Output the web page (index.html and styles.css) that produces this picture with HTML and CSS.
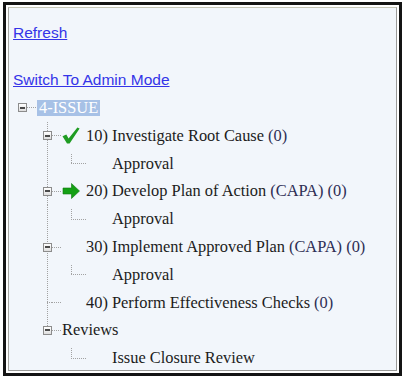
FILE: index.html
```html
<!DOCTYPE html>
<html>
<head>
<meta charset="utf-8">
<title>Issue Tree</title>
<link rel="stylesheet" href="styles.css">
</head>
<body>
<div class="frame">
  <div class="inner">
    <a class="link link-refresh" href="#">Refresh</a>
    <a class="link link-admin" href="#">Switch To Admin Mode</a>
    <div class="tree">
      <div class="row">
        <span class="ind0"></span>
        <span class="tg"><span class="box"></span></span>
        <span class="hd hd-root"></span>
        <span class="sel">4-ISSUE</span>
      </div>

      <div class="row">
        <span class="ind1"></span>
        <span class="tg vl"><span class="box"></span></span>
        <span class="hd"></span>
        <span class="icon">
          <svg width="18" height="17" viewBox="0 0 18 17"><path d="M0.5 9.2 L4.3 7.6 L6.6 11.4 L15.4 0.6 L17.6 1.6 L7.6 16.4 L5 16.4 Z" fill="#1f9c22"/></svg>
        </span>
        <span class="txt">10) Investigate Root Cause <span class="cnt">(0)</span></span>
      </div>
      <div class="row">
        <span class="ind1"></span>
        <span class="tg vl"></span>
        <span class="gap2"></span>
        <span class="elbow"></span>
        <span class="sub">Approval</span>
      </div>

      <div class="row">
        <span class="ind1"></span>
        <span class="tg vl"><span class="box"></span></span>
        <span class="hd"></span>
        <span class="icon">
          <svg width="18" height="16" viewBox="0 0 18 16"><path d="M1 5 L9.5 5 L9.5 0.5 L17.5 8 L9.5 15.5 L9.5 11 L1 11 Z" fill="#14a014" stroke="#0d7a0d" stroke-width="0.6"/></svg>
        </span>
        <span class="txt">20) Develop Plan of Action <span class="cnt">(CAPA) (0)</span></span>
      </div>
      <div class="row">
        <span class="ind1"></span>
        <span class="tg vl"></span>
        <span class="gap2"></span>
        <span class="elbow"></span>
        <span class="sub">Approval</span>
      </div>

      <div class="row">
        <span class="ind1"></span>
        <span class="tg vl"><span class="box"></span></span>
        <span class="hd"></span>
        <span class="icon"></span>
        <span class="txt">30) Implement Approved Plan <span class="cnt">(CAPA) (0)</span></span>
      </div>
      <div class="row">
        <span class="ind1"></span>
        <span class="tg vl"></span>
        <span class="gap2"></span>
        <span class="elbow"></span>
        <span class="sub">Approval</span>
      </div>

      <div class="row">
        <span class="ind1"></span>
        <span class="tg tee"></span>
        <span class="hd"></span>
        <span class="icon"></span>
        <span class="txt">40) Perform Effectiveness Checks <span class="cnt">(0)</span></span>
      </div>

      <div class="row">
        <span class="ind1"></span>
        <span class="tg vt"><span class="box"></span></span>
        <span class="hd"></span>
        <span class="txt">Reviews</span>
      </div>
      <div class="row">
        <span class="ind1"></span>
        <span class="tg"></span>
        <span class="gap2"></span>
        <span class="elbow"></span>
        <span class="sub">Issue Closure Review</span>
      </div>
    </div>
  </div>
</div>
</body>
</html>
```

FILE: styles.css
```css
html, body {
  margin: 0;
  padding: 0;
  background: #ffffff;
}

.frame {
  margin: 2px 0 0 3px;
  width: 389px;
  height: 364px;
  border: 3px solid #141414;
  padding: 2px;
  background: #ffffff;
}

.inner {
  width: 383px;
  height: 346px;
  border: 1px solid #9a9a98;
  border-top-color: #c6c6b6;
  border-left-color: #a8a8a4;
  background: #f2f6fb;
  padding: 16px 0 0 4px;
  display: flex;
  flex-direction: column;
  align-items: flex-start;
}

.link {
  font-family: "Liberation Sans", Arial, sans-serif;
  font-size: 15.5px;
  line-height: 18px;
  color: #3434e8;
  text-decoration: underline;
}

.link-admin {
  margin-top: 29px;
}

.tree {
  margin-top: 4px;
  font-family: "Liberation Serif", "Times New Roman", serif;
  font-size: 16.4px;
  color: #1c1c1c;
}

.row {
  height: 27.8px;
  display: flex;
  align-items: stretch;
}

.row:first-child {
  height: 29px;
}

.row > span {
  flex: none;
}

.ind0 { width: 5px; }
.ind1 { width: 30px; }

.tg {
  width: 9px;
  display: flex;
  align-items: center;
  justify-content: center;
  background-repeat: no-repeat;
}

.vl {
  background-image: repeating-linear-gradient(to bottom, #a2a2a2 0 1px, transparent 1px 2px);
  background-size: 1px 100%;
  background-position: 4px 0;
}

.vt {
  background-image: repeating-linear-gradient(to bottom, #a2a2a2 0 1px, transparent 1px 2px);
  background-size: 1px 50%;
  background-position: 4px 0;
}

.tee {
  background-image:
    repeating-linear-gradient(to bottom, #a2a2a2 0 1px, transparent 1px 2px),
    repeating-linear-gradient(to right, #a2a2a2 0 1px, transparent 1px 2px);
  background-size: 1px 100%, 5px 1px;
  background-position: 4px 0, 4px 50%;
}

.box {
  width: 7px;
  height: 7px;
  border: 1px solid #8c8c8c;
  background: linear-gradient(#ffffff, #dedede);
  display: flex;
  align-items: center;
  justify-content: center;
}

.box::before {
  content: "";
  width: 5px;
  height: 2px;
  background: #4a4a4a;
}

.hd {
  width: 10px;
  background-image: repeating-linear-gradient(to right, #a2a2a2 0 1px, transparent 1px 2px);
  background-size: 100% 1px;
  background-position: 0 50%;
  background-repeat: no-repeat;
}

.hd-root {
  width: 10px;
}

.icon {
  width: 18px;
  margin-right: 6px;
  display: flex;
  align-items: center;
}

.icon svg {
  display: block;
}

.txt,
.sub,
.sel {
  display: flex;
  align-items: center;
  white-space: nowrap;
}

.sel {
  align-self: center;
  height: 16px;
  line-height: 16px;
  padding: 0 2px;
  background: #a7c1e6;
  color: #ffffff;
}

.cnt {
  margin-left: 4px;
  color: #2e2e55;
}

.gap2 {
  width: 19px;
}

.elbow {
  width: 15px;
  margin-right: 26px;
  background-image:
    repeating-linear-gradient(to bottom, #a2a2a2 0 1px, transparent 1px 2px),
    repeating-linear-gradient(to right, #a2a2a2 0 1px, transparent 1px 2px);
  background-size: 1px calc(50% - 4px), 15px 1px;
  background-position: 0 4px, 0 50%;
  background-repeat: no-repeat;
}
```
